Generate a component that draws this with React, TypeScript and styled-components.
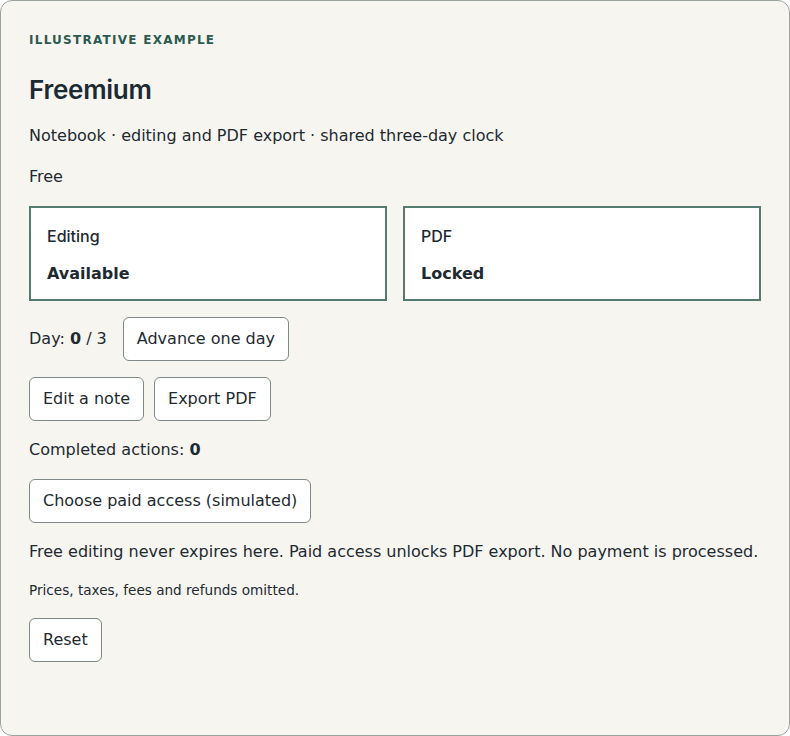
import React, { useState } from "react";
import styled, { createGlobalStyle } from "styled-components";

const GlobalStyle = createGlobalStyle`
  html, body {
    margin: 0;
    padding: 0;
    background: #ffffff;
  }
  body {
    font-family: "DejaVu Sans", "Liberation Sans", sans-serif;
    color: #1e2a30;
  }
  * {
    box-sizing: border-box;
  }
`;

const Card = styled.section`
  min-height: 736px;
  margin: 0;
  padding: 28px 28px 28px 28px;
  border: 1px solid #9ba3a0;
  border-radius: 12px;
  background-color: #f6f5f0;
  display: flex;
  flex-direction: column;
  align-items: flex-start;
`;

const Eyebrow = styled.div`
  font-size: 12px;
  line-height: 22px;
  font-weight: 700;
  letter-spacing: 0.105em;
  text-transform: uppercase;
  color: #2c5a50;
  margin-bottom: 23px;
`;

const Title = styled.h2`
  margin: 0 0 18px 0;
  font-family: Inter, "Noto Sans", sans-serif;
  font-size: 26px;
  line-height: 32px;
  font-weight: 600;
  letter-spacing: -0.01em;
  color: #1b2a33;
`;

const Text = styled.p<{ $gap?: number }>`
  margin: 0 0 ${(p) => p.$gap ?? 17}px 0;
  font-size: 16px;
  line-height: 24px;
`;

const Small = styled.p`
  margin: 0 0 18px 0;
  font-size: 13.6px;
  line-height: 20px;
`;

const FeatureGrid = styled.div`
  width: 100%;
  display: grid;
  grid-template-columns: 1fr 1fr;
  gap: 16px;
  margin-bottom: 16px;
`;

const Feature = styled.div`
  background: #ffffff;
  border: 2px solid #557a70;
  padding: 16px 16px 13px 16px;
  display: flex;
  flex-direction: column;
  gap: 14px;
  font-size: 16px;
  line-height: 24px;
`;

const FeatureName = styled.span`
  font-family: Inter, "Noto Sans", sans-serif;
  font-weight: 500;
  color: #1b2a33;
`;

const FeatureStatus = styled.strong`
  font-weight: 700;
`;

const Row = styled.div<{ $gap?: number; $mb?: number }>`
  display: flex;
  align-items: center;
  gap: ${(p) => p.$gap ?? 10}px;
  margin-bottom: ${(p) => p.$mb ?? 16}px;
  font-size: 16px;
  line-height: 24px;
`;

const Button = styled.button<{ $mb?: number }>`
  font-family: "DejaVu Sans", "Liberation Sans", sans-serif;
  font-size: 16px;
  line-height: 24px;
  color: #1e2a30;
  background: #ffffff;
  border: 1px solid #7d8a87;
  border-radius: 6px;
  padding: 9px 13px;
  cursor: pointer;
  margin-bottom: ${(p) => p.$mb ?? 0}px;

  &:hover {
    background: #f0f3f2;
  }
`;

export default function App() {
  const [day, setDay] = useState(0);
  const [done, setDone] = useState(0);
  const [paid, setPaid] = useState(false);

  const expired = false;
  const pdfOpen = paid;

  return (
    <>
      <GlobalStyle />
      <Card>
        <Eyebrow>Illustrative example</Eyebrow>
        <Title>Freemium</Title>
        <Text>Notebook · editing and PDF export · shared three-day clock</Text>
        <Text $gap={17}>{paid ? "Paid" : "Free"}</Text>
        <FeatureGrid>
          <Feature>
            <FeatureName>Editing</FeatureName>
            <FeatureStatus>{expired ? "Locked" : "Available"}</FeatureStatus>
          </Feature>
          <Feature>
            <FeatureName>PDF</FeatureName>
            <FeatureStatus>{pdfOpen ? "Available" : "Locked"}</FeatureStatus>
          </Feature>
        </FeatureGrid>
        <Row $gap={16}>
          <span>
            Day: <b>{day}</b> / 3
          </span>
          <Button onClick={() => setDay((d) => Math.min(3, d + 1))}>Advance one day</Button>
        </Row>
        <Row $mb={17}>
          <Button onClick={() => setDone((n) => n + 1)}>Edit a note</Button>
          <Button onClick={() => pdfOpen && setDone((n) => n + 1)}>Export PDF</Button>
        </Row>
        <Text $gap={17}>
          Completed actions: <b>{done}</b>
        </Text>
        <Button $mb={17} onClick={() => setPaid(true)}>
          Choose paid access (simulated)
        </Button>
        <Text $gap={16}>
          Free editing never expires here. Paid access unlocks PDF export. No payment is processed.
        </Text>
        <Small>Prices, taxes, fees and refunds omitted.</Small>
        <Button
          onClick={() => {
            setDay(0);
            setDone(0);
            setPaid(false);
          }}
        >
          Reset
        </Button>
      </Card>
    </>
  );
}
